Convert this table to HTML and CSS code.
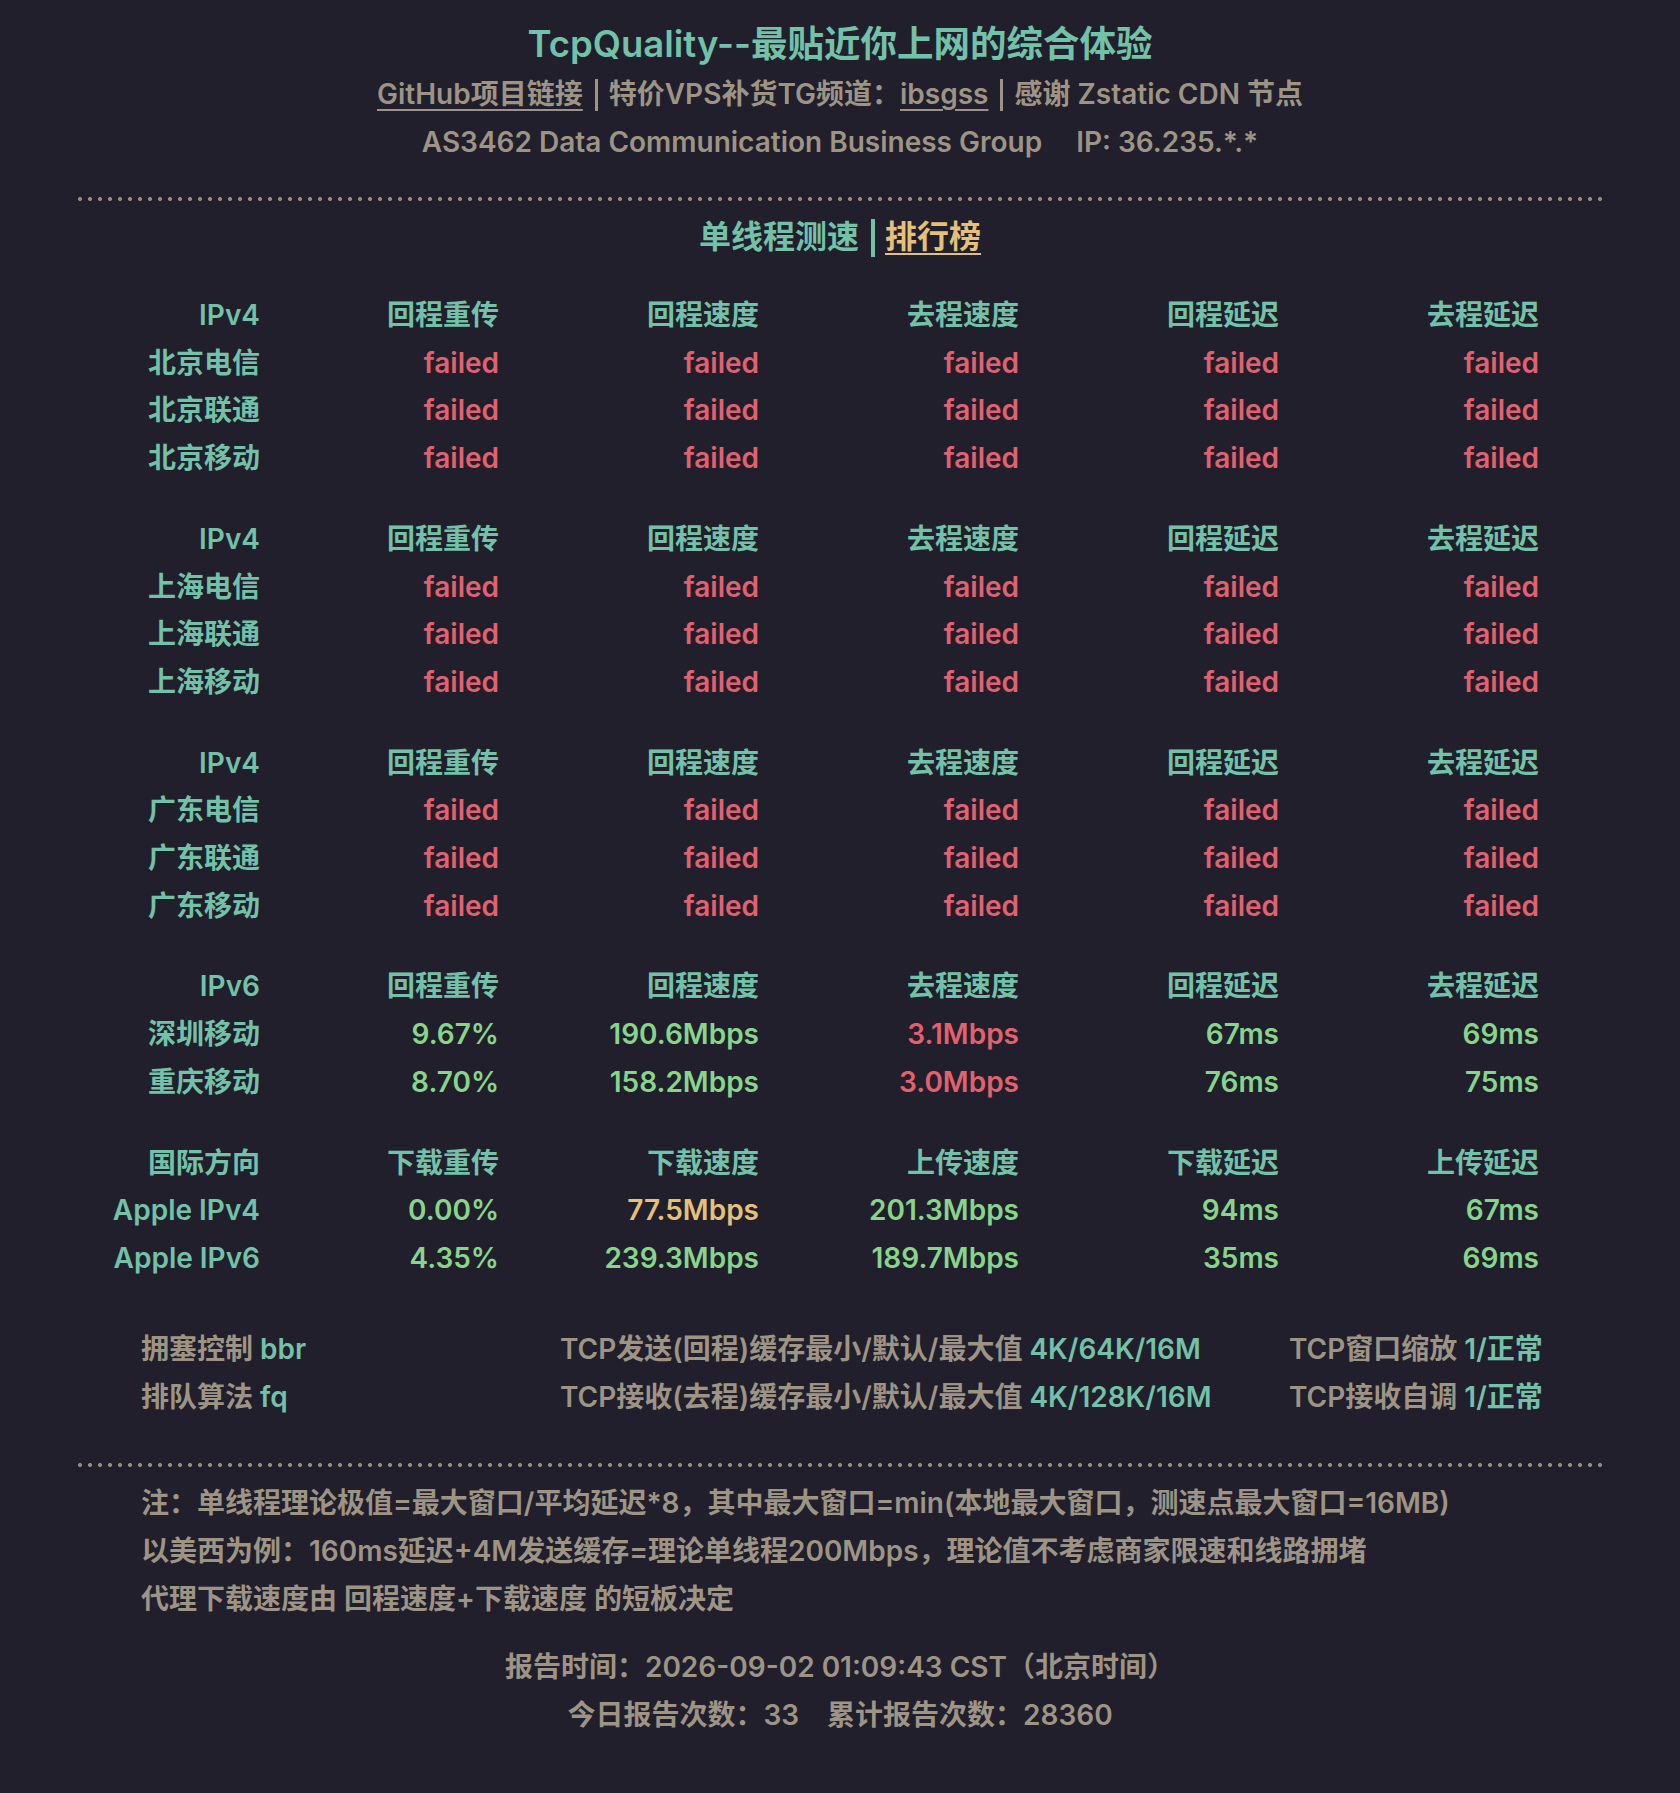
FILE: index.html
```html
<!DOCTYPE html>
<html lang="zh-CN">
<head>
<meta charset="utf-8">
<title>TcpQuality</title>
<link rel="stylesheet" href="styles.css">
</head>
<body>
<div class="page">
  <header class="head">
    <h1 class="title">TcpQuality--最贴近你上网的综合体验</h1>
    <p class="sub"><a class="lnk">GitHub项目链接</a><span class="bar"></span>特价VPS补货TG频道：<a class="lnk">ibsgss</a><span class="bar"></span>感谢 Zstatic CDN 节点</p>
    <p class="sub">AS3462 Data Communication Business Group<span class="gap"></span>IP: 36.235.*.*</p>
  </header>

  <div class="wrap">
    <div class="dots first"></div>
    <div class="tabs"><span class="t-on">单线程测速</span><span class="tbar"></span><a class="t-link">排行榜</a></div>

    <div class="grid">
      <div class="h">IPv4</div><div class="h">回程重传</div><div class="h">回程速度</div><div class="h">去程速度</div><div class="h">回程延迟</div><div class="h">去程延迟</div>
      <div class="h">北京电信</div><div class="r">failed</div><div class="r">failed</div><div class="r">failed</div><div class="r">failed</div><div class="r">failed</div>
      <div class="h">北京联通</div><div class="r">failed</div><div class="r">failed</div><div class="r">failed</div><div class="r">failed</div><div class="r">failed</div>
      <div class="h">北京移动</div><div class="r">failed</div><div class="r">failed</div><div class="r">failed</div><div class="r">failed</div><div class="r">failed</div>
    </div>

    <div class="grid">
      <div class="h">IPv4</div><div class="h">回程重传</div><div class="h">回程速度</div><div class="h">去程速度</div><div class="h">回程延迟</div><div class="h">去程延迟</div>
      <div class="h">上海电信</div><div class="r">failed</div><div class="r">failed</div><div class="r">failed</div><div class="r">failed</div><div class="r">failed</div>
      <div class="h">上海联通</div><div class="r">failed</div><div class="r">failed</div><div class="r">failed</div><div class="r">failed</div><div class="r">failed</div>
      <div class="h">上海移动</div><div class="r">failed</div><div class="r">failed</div><div class="r">failed</div><div class="r">failed</div><div class="r">failed</div>
    </div>

    <div class="grid">
      <div class="h">IPv4</div><div class="h">回程重传</div><div class="h">回程速度</div><div class="h">去程速度</div><div class="h">回程延迟</div><div class="h">去程延迟</div>
      <div class="h">广东电信</div><div class="r">failed</div><div class="r">failed</div><div class="r">failed</div><div class="r">failed</div><div class="r">failed</div>
      <div class="h">广东联通</div><div class="r">failed</div><div class="r">failed</div><div class="r">failed</div><div class="r">failed</div><div class="r">failed</div>
      <div class="h">广东移动</div><div class="r">failed</div><div class="r">failed</div><div class="r">failed</div><div class="r">failed</div><div class="r">failed</div>
    </div>

    <div class="grid">
      <div class="h">IPv6</div><div class="h">回程重传</div><div class="h">回程速度</div><div class="h">去程速度</div><div class="h">回程延迟</div><div class="h">去程延迟</div>
      <div class="h">深圳移动</div><div class="g">9.67%</div><div class="g">190.6Mbps</div><div class="r">3.1Mbps</div><div class="g">67ms</div><div class="g">69ms</div>
      <div class="h">重庆移动</div><div class="g">8.70%</div><div class="g">158.2Mbps</div><div class="r">3.0Mbps</div><div class="g">76ms</div><div class="g">75ms</div>
    </div>

    <div class="grid">
      <div class="h">国际方向</div><div class="h">下载重传</div><div class="h">下载速度</div><div class="h">上传速度</div><div class="h">下载延迟</div><div class="h">上传延迟</div>
      <div class="h">Apple IPv4</div><div class="g">0.00%</div><div class="y">77.5Mbps</div><div class="g">201.3Mbps</div><div class="g">94ms</div><div class="g">67ms</div>
      <div class="h">Apple IPv6</div><div class="g">4.35%</div><div class="g">239.3Mbps</div><div class="g">189.7Mbps</div><div class="g">35ms</div><div class="g">69ms</div>
    </div>

    <div class="conf">
      <div>拥塞控制 <span class="v">bbr</span></div>
      <div>TCP发送(回程)缓存最小/默认/最大值 <span class="v">4K/64K/16M</span></div>
      <div>TCP窗口缩放 <span class="v">1/正常</span></div>
      <div>排队算法 <span class="v">fq</span></div>
      <div>TCP接收(去程)缓存最小/默认/最大值 <span class="v">4K/128K/16M</span></div>
      <div>TCP接收自调 <span class="v">1/正常</span></div>
    </div>

    <div class="dots second"></div>

    <div class="notes">
      <p>注：单线程理论极值=最大窗口/平均延迟*8，其中最大窗口=min(本地最大窗口，测速点最大窗口=16MB)</p>
      <p>以美西为例：160ms延迟+4M发送缓存=理论单线程200Mbps，理论值不考虑商家限速和线路拥堵</p>
      <p>代理下载速度由 回程速度+下载速度 的短板决定</p>
    </div>

    <footer class="foot">
      <p>报告时间：2026-09-02 01:09:43 CST（北京时间）</p>
      <p>今日报告次数：33<span class="gap2"></span>累计报告次数：28360</p>
    </footer>
  </div>
</div>
</body>
</html>
```

FILE: styles.css
```css
html, body {
  margin: 0;
  padding: 0;
  background: #201f2b;
}
body {
  font-family: Inter, "Noto Sans CJK SC", "Noto Sans", sans-serif;
  font-weight: 600;
  font-size: 28px;
  color: #9d9485;
  min-height: 1793px;
}
p { margin: 0; }

.page { padding-top: 18px; }

.head { text-align: center; }
.title {
  margin: 0;
  font-size: 36.5px;
  line-height: 52px;
  font-weight: 600;
  color: #72c1a8;
}
.sub {
  line-height: 48px;
  color: #9d9485;
}
.lnk {
  color: #9d9485;
  text-decoration: underline;
  text-decoration-thickness: 2px;
  text-underline-offset: 5px;
}
.bar {
  display: inline-block;
  width: 3px;
  height: 32px;
  background: #9d9485;
  vertical-align: -7px;
  margin: 0 11px 0 12px;
}
.gap { display: inline-block; width: 34px; }
.gap2 { display: inline-block; width: 28px; }

.wrap {
  width: 1524px;
  margin: 0 auto;
}
.dots {
  height: 4px;
  background-image: radial-gradient(circle at 2px 2px, #958c7e 1.7px, rgba(149,140,126,0) 2.3px);
  background-size: 10px 4px;
  background-repeat: repeat-x;
}
.dots.first { margin-top: 31px; }
.dots.second { margin-top: 42px; }

.tabs {
  margin-top: 12px;
  text-align: center;
  font-size: 32px;
  line-height: 48px;
  color: #72c1a8;
}
.tbar {
  display: inline-block;
  width: 4px;
  height: 38px;
  background: #72c1a8;
  vertical-align: -9px;
  margin: 0 10px 0 12px;
}
.t-link {
  color: #e4c07a;
  text-decoration: underline;
  text-decoration-thickness: 2px;
  text-underline-offset: 5px;
}

.grid {
  display: grid;
  grid-template-columns: 182px 239px repeat(4, 260px);
  line-height: 47.7px;
  text-align: right;
  margin-bottom: 33px;
}
.tabs + .grid { margin-top: 31px; }
.h { color: #72c1a8; }
.r { color: #e0616f; }
.g { color: #88d48c; }
.y { color: #e4c07a; }

.conf {
  display: grid;
  grid-template-columns: 419px 729px auto;
  padding-left: 63px;
  margin-top: 42px;
  line-height: 48px;
  color: #9d9485;
}
.v { color: #72c1a8; }

.notes {
  margin-top: 12px;
  padding-left: 63px;
  line-height: 48px;
}

.foot {
  margin-top: 20px;
  text-align: center;
  line-height: 48px;
}
```
